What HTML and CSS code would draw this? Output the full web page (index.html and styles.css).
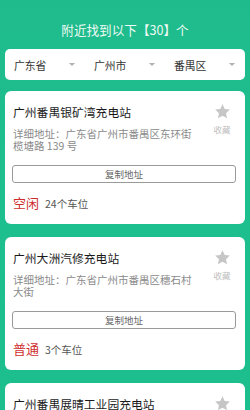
FILE: index.html
```html
<!DOCTYPE html>
<html lang="zh-CN">
<head>
<meta charset="utf-8">
<title>附近充电站</title>
<link rel="stylesheet" href="styles.css">
</head>
<body>
<div class="page">
  <div class="header">附近找到以下【30】个</div>
  <div class="select">
    <div class="sel-col"><span>广东省</span><i class="arrow"></i></div>
    <div class="sel-col"><span>广州市</span><i class="arrow"></i></div>
    <div class="sel-col"><span>番禺区</span><i class="arrow"></i></div>
  </div>
  <div class="list">
    <div class="card">
      <div class="title">广州番禺银矿湾充电站</div>
      <div class="side">
        <svg class="star" viewBox="0 0 24 24"><path d="M12 1.8l3.1 6.6 7.2.9-5.3 5 1.4 7.1L12 17.9l-6.4 3.5 1.4-7.1-5.3-5 7.2-.9z"/></svg>
        <div class="fav">收藏</div>
      </div>
      <div class="addr">详细地址：广东省广州市番禺区东环街榄塘路 139 号</div>
      <div class="copy">复制地址</div>
      <div class="status"><span class="state">空闲</span><span class="spots">24个车位</span></div>
    </div>
    <div class="card">
      <div class="title">广州大洲汽修充电站</div>
      <div class="side">
        <svg class="star" viewBox="0 0 24 24"><path d="M12 1.8l3.1 6.6 7.2.9-5.3 5 1.4 7.1L12 17.9l-6.4 3.5 1.4-7.1-5.3-5 7.2-.9z"/></svg>
        <div class="fav">收藏</div>
      </div>
      <div class="addr">详细地址：广东省广州市番禺区穗石村大街</div>
      <div class="copy">复制地址</div>
      <div class="status"><span class="state">普通</span><span class="spots">3个车位</span></div>
    </div>
    <div class="card">
      <div class="title">广州番禺展晴工业园充电站</div>
      <div class="side">
        <svg class="star" viewBox="0 0 24 24"><path d="M12 1.8l3.1 6.6 7.2.9-5.3 5 1.4 7.1L12 17.9l-6.4 3.5 1.4-7.1-5.3-5 7.2-.9z"/></svg>
        <div class="fav">收藏</div>
      </div>
      <div class="addr">详细地址：广东省广州市番禺区</div>
      <div class="copy">复制地址</div>
      <div class="status"><span class="state">空闲</span><span class="spots">8个车位</span></div>
    </div>
  </div>
</div>
</body>
</html>
```

FILE: styles.css
```css
html, body {
  margin: 0;
  padding: 0;
}
body {
  width: 250px;
  height: 410px;
  overflow: hidden;
  background: #1dbd8d;
  font-family: "Noto Sans CJK SC", "Noto Sans", sans-serif;
}
.page {
  background: linear-gradient(180deg, #1fbb8c 0%, #1ebf8f 40%, #1dbe8e 100%);
  min-height: 410px;
}
.header {
  height: 49px;
  box-sizing: border-box;
  padding-top: 21px;
  line-height: 18px;
  font-size: 12.6px;
  color: #eefaf4;
  text-align: center;
}
.select {
  margin: 0 5px;
  height: 31px;
  background: #fff;
  border-radius: 5px;
  display: grid;
  grid-template-columns: repeat(3, 1fr);
}
.sel-col {
  display: flex;
  align-items: center;
  justify-content: space-between;
  padding: 0 10px 0 9px;
  font-size: 10.8px;
  color: #333;
}
.arrow {
  width: 0;
  height: 0;
  border-left: 3px solid transparent;
  border-right: 3px solid transparent;
  border-top: 3px solid #b0b0b0;
}
.list {
  padding: 11px 5px;
  display: flex;
  flex-direction: column;
  gap: 13px;
}
.card {
  background: #fff;
  border-radius: 6px;
  padding: 12px 8px 11px 8px;
  display: grid;
  grid-template-columns: 187px 28px;
  column-gap: 8px;
}
.title {
  grid-column: 1;
  grid-row: 1;
  font-size: 11.8px;
  line-height: 18px;
  color: #1a1a1a;
  font-weight: 400;
  white-space: nowrap;
}
.side {
  grid-column: 2;
  grid-row: 1 / span 2;
  display: flex;
  flex-direction: column;
  align-items: center;
}
.star {
  width: 17px;
  height: 17px;
  fill: #c6c6c6;
}
.fav {
  margin-top: 3px;
  font-size: 8.5px;
  line-height: 12px;
  color: #bdbdbd;
}
.addr {
  grid-column: 1;
  grid-row: 2;
  margin-top: 7px;
  font-size: 10.5px;
  line-height: 12px;
  color: #8a8a8a;
}
.copy {
  grid-column: 1 / span 2;
  margin: 13px 0 0 -1px;
  height: 18px;
  box-sizing: border-box;
  border: 1px solid #9a9a9a;
  border-radius: 3px;
  font-size: 9.5px;
  line-height: 16px;
  color: #666;
  text-align: center;
}
.status {
  grid-column: 1 / span 2;
  margin-top: 11px;
  line-height: 18px;
  display: flex;
  align-items: baseline;
}
.state {
  font-size: 13px;
  color: #cf2e2e;
}
.spots {
  margin-left: 6px;
  font-size: 10.5px;
  color: #555;
}
```
